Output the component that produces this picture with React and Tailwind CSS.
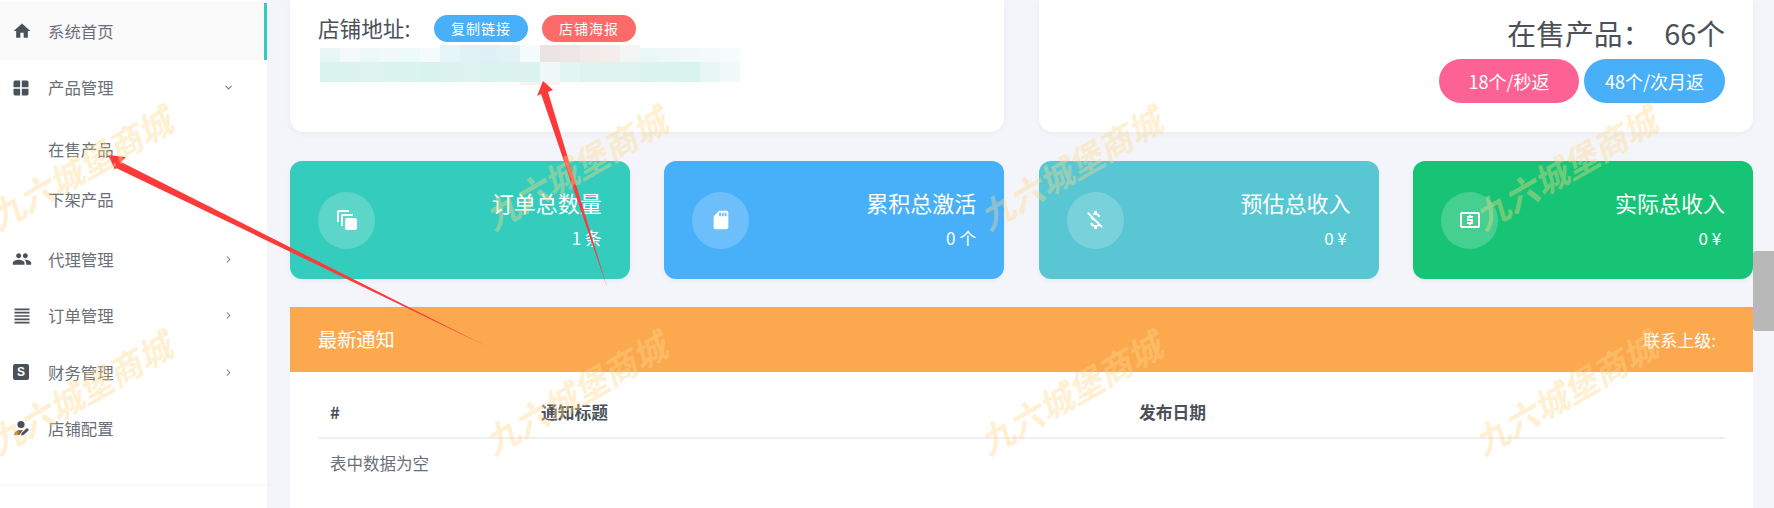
import React from "react";
import { ChevronDown, ChevronRight } from "lucide-react";
import {
  MdHome,
  MdWindow,
  MdPeople,
  MdFormatAlignJustify,
  MdAutoAwesomeMotion,
  MdSdCard,
  MdMoneyOff,
  MdLocalAtm,
} from "react-icons/md";

const font = "font-['Noto_Sans_CJK_SC','Noto_Sans',sans-serif]";

// person with a pencil, not in the icon packs
const PersonEdit = () => (
  <svg width="17" height="17" viewBox="0 0 17 17" fill="#4b5159">
    <circle cx="8" cy="4.5" r="3.6" />
    <path d="M1 15c0-3 3-5 7-5 .8 0 1.500.1 2 .2L6.500 15z" fill="#8a6d3b" />
    <path d="M8 15.500l.6-2.600 5.400-5 2 2-5.400 5z" />
  </svg>
);

const SquareS = () => (
  <div className="w-4 h-4 rounded-[2px] bg-[#4b5159] text-white text-[12px] font-bold leading-4 text-center font-['Liberation_Sans',sans-serif]">
    S
  </div>
);

const MenuItem = ({ icon, label, arrow, active }) => (
  <div
    className={`h-[56.500px] flex items-center pl-[13px] relative ${
      active ? "bg-[#fafafb] border-r-[3px] border-[#34ccbc]" : ""
    }`}
  >
    <div className="w-[35px] text-[#4b5159] flex items-center">{icon}</div>
    <span className="text-[16.400px] text-[#6b7078]">{label}</span>
    {arrow === "down" && (
      <ChevronDown size={11} strokeWidth={2.200} className="absolute left-[223px] text-[#6b7078]" />
    )}
    {arrow === "right" && (
      <ChevronRight size={11} strokeWidth={2.200} className="absolute left-[223px] text-[#6b7078]" />
    )}
  </div>
);

const Sidebar = () => (
  <aside className="w-[267px] h-full shrink-0 bg-white pt-[2px]">
    <div className="border-t border-[#f5f5f6]">
      <MenuItem active icon={<MdHome size={20} className="-ml-[1px]" />} label="系统首页" />
      <MenuItem icon={<MdWindow size={20} className="-ml-[2px]" />} label="产品管理" arrow="down" />
      <div className="pt-[8px] pb-[7px]">
        <div className="h-[50px] flex items-center pl-[48px] text-[16.400px] text-[#6b7078]">在售产品</div>
        <div className="h-[50px] flex items-center pl-[48px] text-[16.400px] text-[#6b7078]">下架产品</div>
      </div>
      <MenuItem icon={<MdPeople size={20} className="-ml-[1px]" />} label="代理管理" arrow="right" />
      <MenuItem icon={<MdFormatAlignJustify size={20} className="-ml-[1px]" />} label="订单管理" arrow="right" />
      <MenuItem icon={<SquareS />} label="财务管理" arrow="right" />
      <MenuItem icon={<PersonEdit />} label="店铺配置" />
    </div>
    <div className="mt-[27px] border-t border-[#f5f5f6]" />
  </aside>
);

const topRow = [
  "#e8f7f5", "#f3faf9", "#edf9f7", "#f2faf9", "#eefaf7", "#f5fbfb", "#e6f5f7",
  "#e1f2f7", "#dff1f7", "#e2f2f6", "#f4fbfb", "#ece4e4", "#eee6e6", "#f4ebe9",
  "#f5ecec", "#f5f5f3", "#e9f8f6", "#eef9f7", "#f1faf9", "#f4faf9", "#f7fbfb",
];
const bottomRow = [
  "#d9f3ef", "#dbf3ef", "#ddf4f0", "#dcf4f0", "#dbf3ef", "#d8f2ee", "#dbf3ef",
  "#ddf4f0", "#dbf3ef", "#dcf4f0", "#dcf3ef", "#eef8f7", "#e2f6f2", "#def4f0",
  "#def4f0", "#dff4f0", "#dbf3ef", "#dcf4f0", "#d9f3ef", "#e6f7f4", "#f1faf9",
];

// pasted mosaic over the shop url
const Mosaic = () => (
  <svg width="420" height="40" viewBox="0 0 420 40" className="mt-[3px] block">
    {topRow.map((c, i) => (
      <rect key={i} x={i * 20} y={i > 5 && i < 16 ? 0 : 3} width="20" height={i > 5 && i < 16 ? 17 : 14} fill={c} />
    ))}
    {bottomRow.map((c, i) => (
      <rect key={i} x={i * 20} y="17" width="20" height="20" fill={c} />
    ))}
    <rect x="200" y="37" width="40" height="3" fill="#fdf1f0" />
  </svg>
);

const StatCard = ({ color, circle, icon, title, value }) => (
  <div className={`h-[118px] rounded-[12px] px-[28px] flex items-center justify-between text-white shadow-[0_2px_6px_rgba(0,0,0,0.04)] ${color}`}>
    <div className={`w-[57px] h-[57px] rounded-full flex items-center justify-center ${circle}`}>{icon}</div>
    <div className="text-right pb-[4px]">
      <div className="text-[22px] leading-[30px]">{title}</div>
      <div className="text-[17px] leading-[24px] mt-[9px] whitespace-pre">{value}</div>
    </div>
  </div>
);

const Arrows = () => (
  <svg className="absolute left-0 top-0 pointer-events-none" width="1774" height="508" viewBox="0 0 1774 508">
    <path d="M108 155 L126 157 L121 162 L486 346 L116 168 L115 170 Z" fill="#fc3a3a" />
    <path d="M543 81 L553 90 L548 92 L607 287 L541 94 L537 96 Z" fill="#fc3a3a" />
  </svg>
);

const Watermarks = () => (
  <div className="absolute left-[-168px] top-[55px] grid grid-cols-[repeat(4,495px)] grid-rows-[repeat(2,225px)] place-items-center pointer-events-none">
    {Array.from({ length: 8 }).map((_, i) => (
      <div key={i} className="-rotate-[30deg] italic font-bold text-[34px] leading-none whitespace-nowrap text-[#ffd989]/40">
        九六城堡商城
      </div>
    ))}
  </div>
);

const App = () => {
  return (
    <div className={`relative w-full h-[508px] overflow-hidden flex bg-[#f3f5fa] ${font}`}>
      <Sidebar />

      <main className="flex-1 min-w-0 pl-[23px]">
        <div className="grid grid-cols-2 gap-[35px]">
          <div className="h-[132px] bg-white rounded-b-[14px] shadow-[0_2px_6px_rgba(0,0,0,0.04)] pl-[28px] pt-[15px]">
            <div className="flex items-center h-[27px]">
              <span className="text-[21.600px] text-[#4b5159] w-[116px] whitespace-nowrap">店铺地址:</span>
              <button className="w-[94px] h-[27px] rounded-full bg-[#48b0f9] text-white text-[14px] tracking-[1px]">复制链接</button>
              <button className="w-[94px] h-[27px] ml-[14px] rounded-full bg-[#fd6a6a] text-white text-[14px] tracking-[1px]">店铺海报</button>
            </div>
            <div className="ml-[2px]">
              <Mosaic />
            </div>
          </div>
          <div className="h-[132px] bg-white rounded-b-[14px] shadow-[0_2px_6px_rgba(0,0,0,0.04)] pr-[28px] pt-[13px] flex flex-col items-end">
            <div className="text-[28.800px] leading-[40px] text-[#4b5159] whitespace-pre">在售产品：  66个</div>
            <div className="flex gap-[5px] mt-[6px]">
              <div className="w-[140px] h-[44px] rounded-full bg-[#fd6295] text-white text-[18px] flex items-center justify-center">18个/秒返</div>
              <div className="w-[141px] h-[44px] rounded-full bg-[#48b0f9] text-white text-[18px] flex items-center justify-center">48个/次月返</div>
            </div>
          </div>
        </div>

        <div className="grid grid-cols-4 gap-[34.500px] mt-[29px]">
          <StatCard color="bg-[#34ccbc]" circle="bg-white/20" icon={<MdAutoAwesomeMotion size={24} />} title="订单总数量" value="1 条" />
          <StatCard color="bg-[#48b0f9]" circle="bg-white/20" icon={<MdSdCard size={22} />} title="累积总激活" value="0 个" />
          <StatCard color="bg-[#58c7d3]" circle="bg-white/20" icon={<MdMoneyOff size={24} />} title="预估总收入" value="0 ¥ " />
          <StatCard color="bg-[#17c475]" circle="bg-white/20" icon={<MdLocalAtm size={24} />} title="实际总收入" value="0 ¥ " />
        </div>

        <section className="mt-[28px] bg-white h-[201px]">
          <div className="h-[65px] bg-[#fca84e] flex items-center justify-between pl-[28px] pr-[37px] text-white">
            <span className="text-[19.200px]">最新通知</span>
            <span className="text-[17px]">联系上级:</span>
          </div>
          <div className="mx-[28px] mt-[17px]">
            <div className="grid grid-cols-[211px_598px_1fr] h-[50px] border-b-2 border-[#eeeff1] items-center text-[16.800px] font-bold text-[#4b5159]">
              <span className="pl-[12px]">#</span>
              <span className="pl-[12px]">通知标题</span>
              <span className="pl-[12px]">发布日期</span>
            </div>
            <div className="h-[48px] flex items-center pl-[12px] text-[16.500px] text-[#6b7078]">表中数据为空</div>
          </div>
        </section>
      </main>

      <div className="w-[21px] h-full shrink-0 pt-[251px]">
        <div className="h-[80px] bg-[#b8b8b9] rounded-l-[3px]" />
      </div>

      <Arrows />
      <Watermarks />
    </div>
  );
};

export default App;
